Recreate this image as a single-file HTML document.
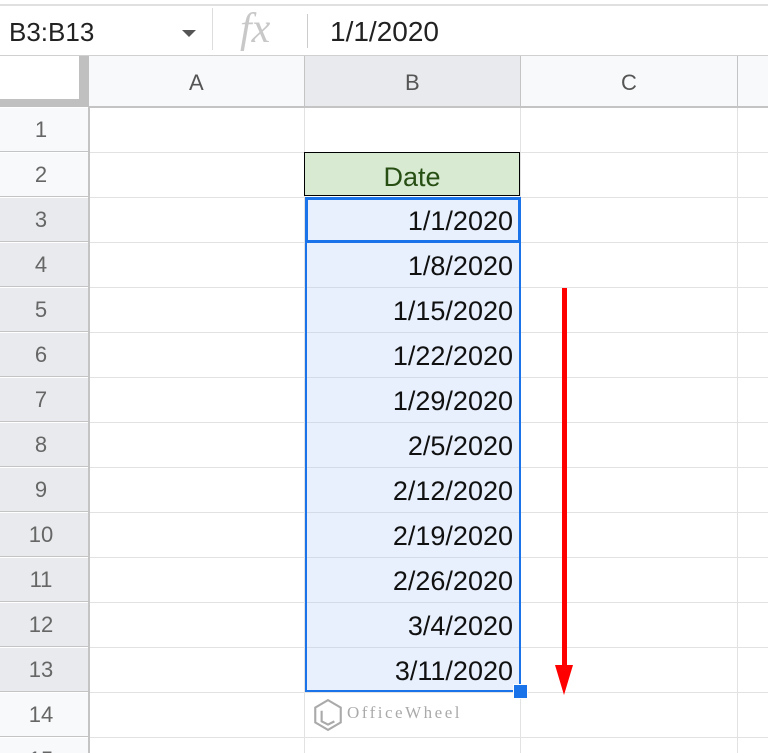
<!DOCTYPE html><html style="overflow:hidden"><head><style>
html,body{overflow:hidden;height:753px}
body{margin:0;width:768px;background:#fff;font-family:"Liberation Sans",Arial,sans-serif;position:relative}
.a{position:absolute}
.rh{position:absolute;left:0;width:88px;height:44px;border-bottom:1px solid #c4c4c4;text-align:center;line-height:44px;font-size:22px;color:#666;background:#f8f9fa;padding-right:6px;box-sizing:border-box}
.rh.s{background:#e8eaed}
.hl{position:absolute;left:90px;width:678px;height:1px;background:#e2e2e2}
.vl{position:absolute;top:108px;width:1px;height:645px;background:#e2e2e2}
.c{position:absolute;left:305px;width:208px;height:45px;line-height:48px;text-align:right;font-size:27px;color:#111}
</style></head><body>
<div class="a" style="left:0;top:4px;width:768px;height:2px;background:#e0e0e0"></div>
<div class="a" style="left:0;top:55px;width:768px;height:1px;background:#d0d0d0"></div>
<div class="a" style="left:9px;top:17px;font-size:26px;color:#222">B3:B13</div>
<div class="a" style="left:182px;top:30px;width:0;height:0;border-left:7px solid transparent;border-right:7px solid transparent;border-top:7px solid #555"></div>
<div class="a" style="left:212px;top:8px;width:1px;height:42px;background:#ddd"></div>
<div class="a" style="left:240px;top:5px;font-family:'Liberation Serif',serif;font-style:italic;font-size:42px;color:#c8c8c8">fx</div>
<div class="a" style="left:307px;top:14px;width:1px;height:34px;background:#ccc"></div>
<div class="a" style="left:330px;top:16px;font-size:28px;color:#222">1/1/2020</div>
<div class="a" style="left:0;top:56px;width:768px;height:51px;background:#f8f9fa"></div>
<div class="a" style="left:305px;top:56px;width:216px;height:51px;background:#e8eaed"></div>
<div class="a" style="left:0;top:56px;width:79px;height:43px;background:#fff"></div>
<div class="a" style="left:79px;top:56px;width:10px;height:51px;background:#c0c0c0"></div>
<div class="a" style="left:0;top:99px;width:89px;height:8px;background:#c0c0c0"></div>
<div class="a" style="left:89px;top:106px;width:679px;height:2px;background:#c4c4c4"></div>
<div class="a" style="left:189px;top:70px;font-size:22px;color:#555">A</div>
<div class="a" style="left:405px;top:70px;font-size:22px;color:#555">B</div>
<div class="a" style="left:621px;top:70px;font-size:22px;color:#555">C</div>
<div class="a" style="left:304px;top:56px;width:1px;height:51px;background:#c4c4c4"></div>
<div class="a" style="left:520px;top:56px;width:1px;height:51px;background:#c4c4c4"></div>
<div class="a" style="left:737px;top:56px;width:1px;height:51px;background:#c4c4c4"></div>
<div class="rh" style="top:108px">1</div>
<div class="rh" style="top:153px">2</div>
<div class="rh s" style="top:198px">3</div>
<div class="rh s" style="top:243px">4</div>
<div class="rh s" style="top:288px">5</div>
<div class="rh s" style="top:333px">6</div>
<div class="rh s" style="top:378px">7</div>
<div class="rh s" style="top:423px">8</div>
<div class="rh s" style="top:468px">9</div>
<div class="rh s" style="top:513px">10</div>
<div class="rh s" style="top:558px">11</div>
<div class="rh s" style="top:603px">12</div>
<div class="rh s" style="top:648px">13</div>
<div class="rh" style="top:693px">14</div>
<div class="rh" style="top:738px">15</div>
<div class="a" style="left:88px;top:107px;width:2px;height:646px;background:#c4c4c4"></div>
<div class="hl" style="top:152px"></div><div class="hl" style="top:197px"></div><div class="hl" style="top:242px"></div><div class="hl" style="top:287px"></div><div class="hl" style="top:332px"></div><div class="hl" style="top:377px"></div><div class="hl" style="top:422px"></div><div class="hl" style="top:467px"></div><div class="hl" style="top:512px"></div><div class="hl" style="top:557px"></div><div class="hl" style="top:602px"></div><div class="hl" style="top:647px"></div><div class="hl" style="top:692px"></div><div class="hl" style="top:737px"></div>
<div class="vl" style="left:304px"></div><div class="vl" style="left:520px"></div><div class="vl" style="left:737px"></div>
<div class="a" style="left:304px;top:152px;width:216px;height:44px;background:#d9ead3;border:1px solid #000;box-sizing:border-box;text-align:center;line-height:48px;font-size:27px;color:#274e13">Date</div>
<div class="a" style="left:305px;top:197px;width:216px;height:495px;background:#e8f0fd;border:2px solid #1a73e8;box-sizing:border-box"></div>
<div class="hl" style="left:307px;width:212px;top:287px;background:#d4dbe6"></div><div class="hl" style="left:307px;width:212px;top:332px;background:#d4dbe6"></div><div class="hl" style="left:307px;width:212px;top:377px;background:#d4dbe6"></div><div class="hl" style="left:307px;width:212px;top:422px;background:#d4dbe6"></div><div class="hl" style="left:307px;width:212px;top:467px;background:#d4dbe6"></div><div class="hl" style="left:307px;width:212px;top:512px;background:#d4dbe6"></div><div class="hl" style="left:307px;width:212px;top:557px;background:#d4dbe6"></div><div class="hl" style="left:307px;width:212px;top:602px;background:#d4dbe6"></div><div class="hl" style="left:307px;width:212px;top:647px;background:#d4dbe6"></div>
<div class="a" style="left:305px;top:197px;width:216px;height:46px;border:3px solid #1a73e8;box-sizing:border-box"></div>
<div class="a" style="left:513px;top:684px;width:13px;height:13px;background:#1a73e8;border:1px solid #fff"></div>
<div class="c" style="top:197px">1/1/2020</div>
<div class="c" style="top:242px">1/8/2020</div>
<div class="c" style="top:287px">1/15/2020</div>
<div class="c" style="top:332px">1/22/2020</div>
<div class="c" style="top:377px">1/29/2020</div>
<div class="c" style="top:422px">2/5/2020</div>
<div class="c" style="top:467px">2/12/2020</div>
<div class="c" style="top:512px">2/19/2020</div>
<div class="c" style="top:557px">2/26/2020</div>
<div class="c" style="top:602px">3/4/2020</div>
<div class="c" style="top:647px">3/11/2020</div>
<svg class="a" style="left:313px;top:698px" width="30" height="34" viewBox="0 0 28 32"><polygon points="14,2 26,9 26,23 14,30 2,23 2,9" fill="none" stroke="#aaa" stroke-width="2"/><path d="M8,12 V22 L14,25 L20,22" fill="none" stroke="#aaa" stroke-width="2"/></svg>
<div class="a" style="left:347px;top:703px;font-family:'Liberation Serif',serif;font-size:17px;letter-spacing:2.5px;color:#aaa">OfficeWheel</div>
<div class="a" style="left:562px;top:288px;width:5px;height:385px;background:#f00"></div>
<div class="a" style="left:555px;top:665px;width:0;height:0;border-left:9px solid transparent;border-right:9px solid transparent;border-top:30px solid #f00"></div>
</body></html>
